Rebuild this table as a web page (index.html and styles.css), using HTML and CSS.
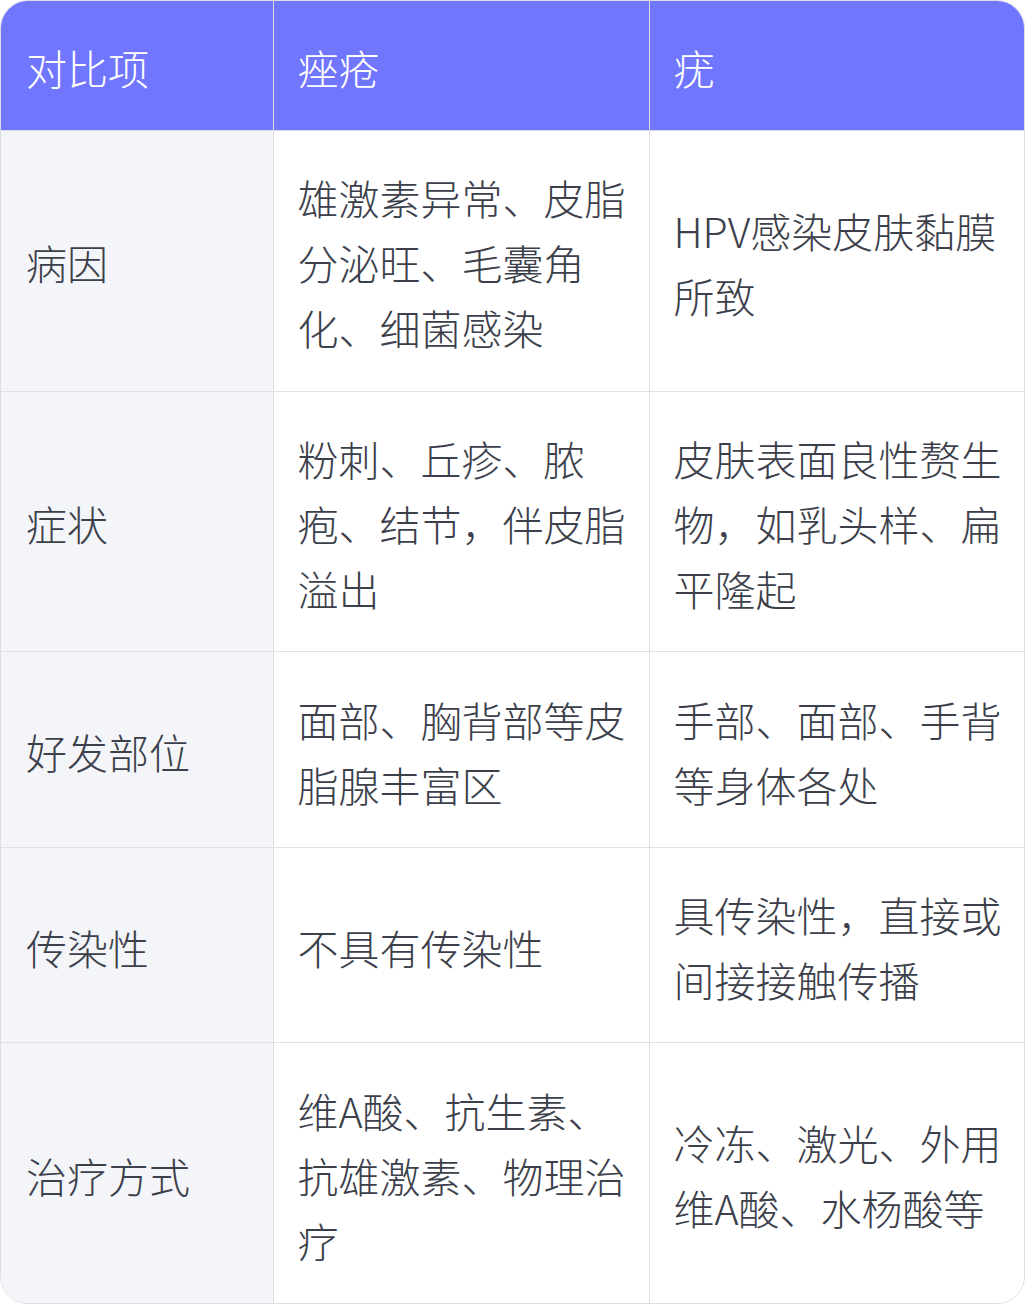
FILE: index.html
```html
<!DOCTYPE html>
<html lang="zh-CN">
<head>
<meta charset="utf-8">
<link rel="stylesheet" href="styles.css">
</head>
<body>
<div class="wrap">
<table class="cmp">
  <colgroup><col class="c1"><col class="c2"><col class="c3"></colgroup>
  <thead>
    <tr><th>对比项</th><th>痤疮</th><th>疣</th></tr>
  </thead>
  <tbody>
    <tr><td class="lbl">病因</td><td>雄激素异常、皮脂分泌旺、毛囊角化、细菌感染</td><td>HPV感染皮肤黏膜所致</td></tr>
    <tr><td class="lbl">症状</td><td>粉刺、丘疹、脓疱、结节，伴皮脂溢出</td><td>皮肤表面良性赘生物，如乳头样、扁平隆起</td></tr>
    <tr><td class="lbl">好发部位</td><td>面部、胸背部等皮脂腺丰富区</td><td>手部、面部、手背等身体各处</td></tr>
    <tr><td class="lbl">传染性</td><td>不具有传染性</td><td>具传染性，直接或间接接触传播</td></tr>
    <tr><td class="lbl">治疗方式</td><td>维A酸、抗生素、抗雄激素、物理治疗</td><td>冷冻、激光、外用维A酸、水杨酸等</td></tr>
  </tbody>
</table>
</div>
</body>
</html>
```

FILE: styles.css
```css
html, body {
  margin: 0;
  padding: 0;
  background: #ffffff;
}
.wrap {
  width: 1025px;
  height: 1304px;
  box-sizing: border-box;
  border: 1px solid #dcdde3;
  border-radius: 28px;
  overflow: hidden;
}
.cmp {
  width: 100%;
  height: 100%;
  border-collapse: collapse;
  table-layout: fixed;
  font-family: "Noto Sans CJK SC", "Noto Sans", sans-serif;
  font-size: 41px;
  font-weight: 300;
  line-height: 65px;
}
.c1 { width: 272px; }
.c2 { width: 376px; }
.c3 { width: auto; }
.cmp th {
  background: #7176ff;
  color: #ffffff;
  font-weight: 300;
  text-align: left;
  padding: 34px 12px 30px 24px;
  border-left: 1px solid #d9dae6;
  border-bottom: 1px solid #d9dae6;
  vertical-align: middle;
}
.cmp td {
  color: #3c404b;
  padding: 34px 12px 30px 24px;
  border-left: 1px solid #e0e1e6;
  border-top: 1px solid #e0e1e6;
  vertical-align: middle;
  background: #ffffff;
}
.cmp th:first-child, .cmp td:first-child {
  border-left: none;
  padding-left: 25px;
}
.cmp td.lbl {
  background: #f4f5f9;
}
```
